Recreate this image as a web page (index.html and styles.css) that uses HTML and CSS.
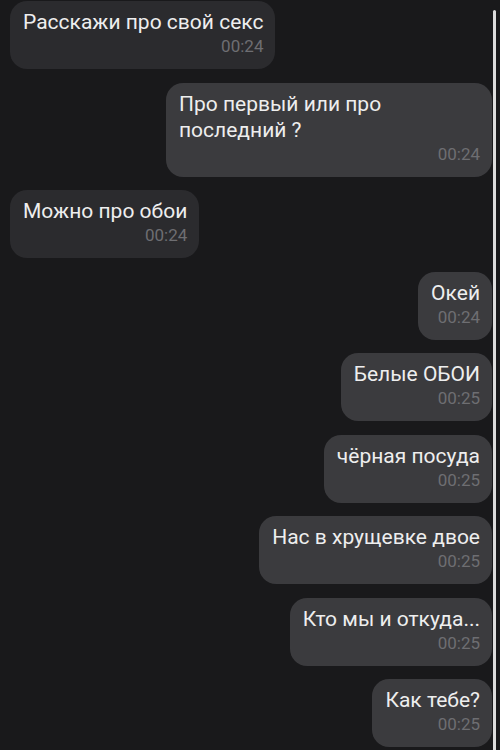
FILE: index.html
```html
<!DOCTYPE html>
<html lang="ru">
<head>
    <meta charset="UTF-8">
    <meta name="viewport" content="width=device-width, initial-scale=1.0">
    <title>Чат</title>
    <link rel="stylesheet" href="styles.css">
</head>
<body>
    <div class="screen">
        <div class="chat">
            <div class="msg in">
                <div class="msg-text">Расскажи про свой секс</div>
                <div class="msg-time">00:24</div>
            </div>
            <div class="msg out">
                <div class="msg-text">Про первый или про последний ?</div>
                <div class="msg-time">00:24</div>
            </div>
            <div class="msg in">
                <div class="msg-text">Можно про обои</div>
                <div class="msg-time">00:24</div>
            </div>
            <div class="msg out">
                <div class="msg-text">Окей</div>
                <div class="msg-time">00:24</div>
            </div>
            <div class="msg out">
                <div class="msg-text">Белые ОБОИ</div>
                <div class="msg-time">00:25</div>
            </div>
            <div class="msg out">
                <div class="msg-text">чёрная посуда</div>
                <div class="msg-time">00:25</div>
            </div>
            <div class="msg out">
                <div class="msg-text">Нас в хрущевке двое</div>
                <div class="msg-time">00:25</div>
            </div>
            <div class="msg out">
                <div class="msg-text">Кто мы и откуда...</div>
                <div class="msg-time">00:25</div>
            </div>
            <div class="msg out">
                <div class="msg-text">Как тебе?</div>
                <div class="msg-time">00:25</div>
            </div>
        </div>
        <div class="scrollbar"></div>
    </div>
</body>
</html>
```

FILE: styles.css
```css
body {
    margin: 0;
    background-color: #19191b;
    font-family: Roboto, "Noto Sans", sans-serif;
    color: #eeeeee;
    height: 750px;
    overflow: hidden;
}

.screen {
    display: flex;
    height: 750px;
    padding-right: 4px;
}

.chat {
    flex: 1;
    display: flex;
    flex-direction: column;
    gap: 13.5px;
    padding: 1px 0 0 10px;
}

.msg {
    max-width: 326px;
    padding: 8px 12px 13px 13px;
    border-radius: 17px;
    box-sizing: border-box;
}

.msg.in {
    align-self: flex-start;
    background-color: #2b2b2e;
}

.msg.out {
    align-self: flex-end;
    background-color: #3b3b3e;
}

.msg-text {
    font-size: 21px;
    line-height: 26px;
}

.msg-time {
    text-align: right;
    font-size: 17px;
    line-height: 20px;
    margin-top: 1px;
    color: #6e6e72;
}

.scrollbar {
    width: 3px;
    margin-top: 10px;
    margin-left: 1px;
    background-color: #dcdcdc;
    border-radius: 2px 2px 0 0;
}
```
